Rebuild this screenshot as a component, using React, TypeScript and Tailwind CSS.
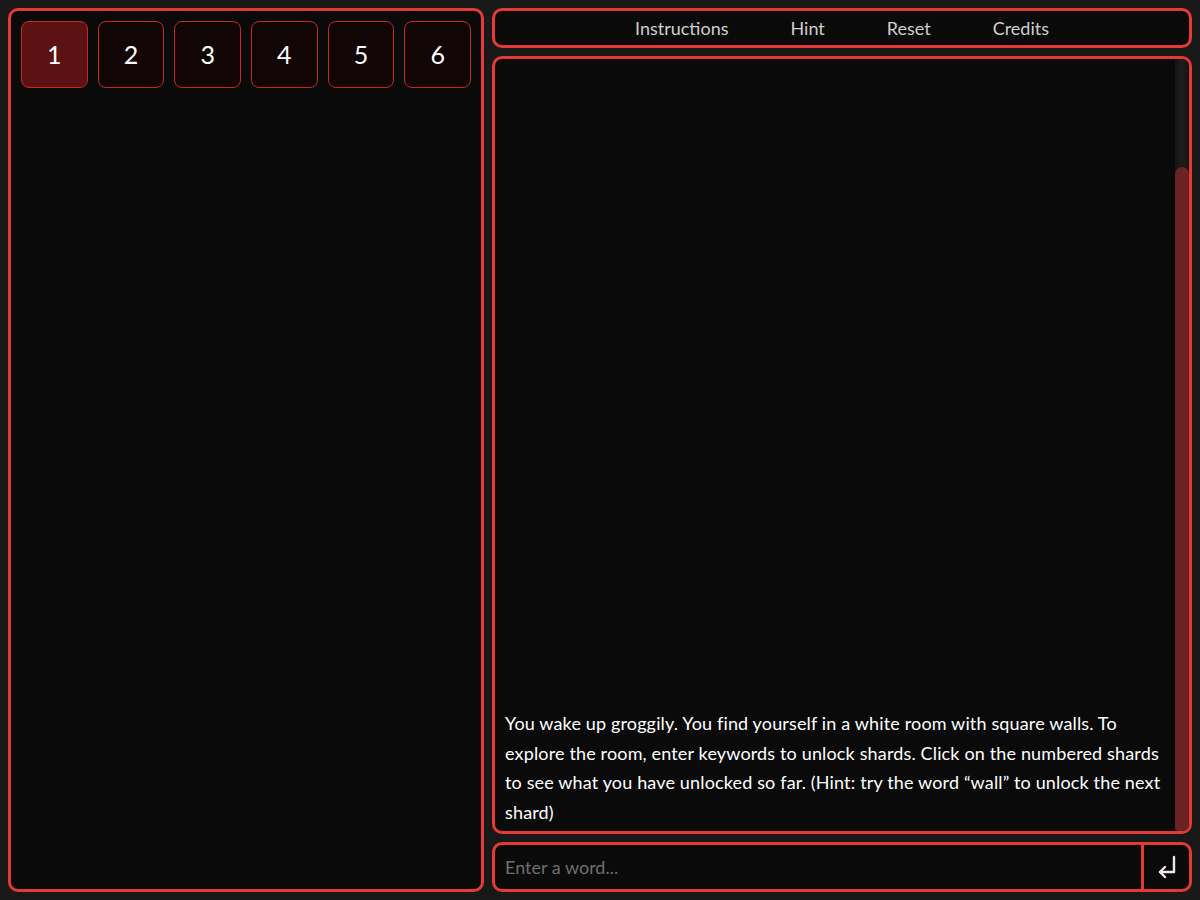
import React from "react";

export default function App() {
  const shards = [1, 2, 3, 4, 5, 6];
  const font = { fontFamily: "Lato, 'Open Sans', sans-serif" };
  return (
    <div className="w-[1200px] h-[900px] bg-[#181818] p-2 flex gap-2 text-white" style={font}>
      <div className="w-[476px] h-full border-[3px] border-[#e53935] rounded-[10px] bg-[#0a0a0a] px-[10px] py-[10px]">
        <div className="flex gap-[10px]">
          {shards.map((n) => (
            <div
              key={n}
              className={`w-[67px] h-[67px] rounded-[8px] border border-[#c62828] flex items-center justify-center text-[25px] ${
                n === 1 ? "bg-[#5c1212]" : "bg-[#120505]"
              }`}
            >
              {n}
            </div>
          ))}
        </div>
      </div>
      <div className="flex-1 flex flex-col gap-2">
        <div className="h-[40px] border-[3px] border-[#e53935] rounded-[10px] bg-[#0a0a0a] flex items-center justify-center text-[18px] text-[#cfcfcf]">
          <span className="px-[31px]">Instructions</span>
          <span className="px-[31px]">Hint</span>
          <span className="px-[31px]">Reset</span>
          <span className="px-[31px]">Credits</span>
        </div>
        <div className="flex-1 border-[3px] border-[#e53935] rounded-[10px] bg-[#0a0a0a] flex overflow-hidden">
          <div className="flex-1 flex flex-col justify-end px-[10px] pb-[4px] text-[18px] tracking-[0.15px] leading-[29.4px] text-white">
            <p>
              You wake up groggily. You find yourself in a white room with square walls. To explore the room,
              enter keywords to unlock shards. Click on the numbered shards to see what you have unlocked so far.
              (Hint: try the word “wall” to unlock the next shard)
            </p>
          </div>
          <div className="w-[14px] flex flex-col bg-gradient-to-r from-[#141414] via-[#1e1e1e] to-[#141414]">
            <div className="h-[108px]" />
            <div className="flex-1 bg-[#6b2222] rounded-t-[7px] rounded-b-[4px]" />
          </div>
        </div>
        <div className="h-[50px] border-[3px] border-[#e53935] rounded-[10px] bg-[#0a0a0a] flex">
          <div className="flex-1 flex items-center px-[10px] text-[18px] text-[#6f6f6f]">Enter a word...</div>
          <div className="w-[48px] border-l-[3px] border-[#e53935] flex items-center justify-center">
            <svg width="22" height="26" viewBox="0 0 22 26" fill="none" stroke="#f3e6e6" strokeWidth="2.4" strokeLinecap="round" strokeLinejoin="round">
              <path d="M18 3 V18 H4" />
              <path d="M9 13 L4 18 L9 23" />
            </svg>
          </div>
        </div>
      </div>
    </div>
  );
}
